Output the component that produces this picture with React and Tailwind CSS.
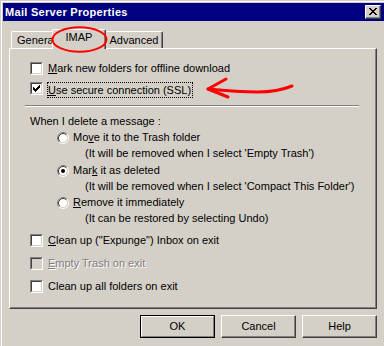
import React from "react";

function CheckMark() {
  const cols = [2, 3, 4, 3, 2, 1, 0];
  return (
    <svg width="7" height="7" viewBox="0 0 7 7" shapeRendering="crispEdges">
      {cols.map((y, x) => (
        <rect key={x} x={x} y={y} width="1" height="3" fill="#000" />
      ))}
    </svg>
  );
}

function CheckBox({ checked = false, disabled = false }) {
  return (
    <span className="block w-[13px] h-[13px] shrink-0 border border-t-[#808080] border-l-[#808080] border-b-white border-r-white">
      <span
        className={
          disabled
            ? "flex items-center justify-center w-full h-full border border-t-[#404040] border-l-[#404040] border-b-[#d4d0c8] border-r-[#d4d0c8] bg-[#d4d0c8]"
            : "flex items-center justify-center w-full h-full border border-t-[#404040] border-l-[#404040] border-b-[#d4d0c8] border-r-[#d4d0c8] bg-white"
        }
      >
        {checked && <CheckMark />}
      </span>
    </span>
  );
}

function Radio({ checked = false }) {
  return (
    <svg width="12" height="12" viewBox="0 0 12 12" className="shrink-0 block">
      <circle cx="6" cy="6" r="4.2" fill="#fff" />
      <path d="M2.11 9.89 A5.5 5.5 0 0 1 9.89 2.11" fill="none" stroke="#808080" strokeWidth="1" />
      <path d="M9.89 2.11 A5.5 5.5 0 0 1 2.11 9.89" fill="none" stroke="#ffffff" strokeWidth="1" />
      <path d="M2.82 9.18 A4.5 4.5 0 0 1 9.18 2.82" fill="none" stroke="#404040" strokeWidth="1" />
      <path d="M9.18 2.82 A4.5 4.5 0 0 1 2.82 9.18" fill="none" stroke="#d4d0c8" strokeWidth="1" />
      {checked && <circle cx="6" cy="6" r="2" fill="#000" />}
    </svg>
  );
}

function CloseGlyph() {
  const rows = [
    [[0, 2], [6, 2]],
    [[1, 2], [5, 2]],
    [[2, 4]],
    [[3, 2]],
    [[2, 4]],
    [[1, 2], [5, 2]],
    [[0, 2], [6, 2]],
  ];
  return (
    <svg width="8" height="7" viewBox="0 0 8 7" shapeRendering="crispEdges">
      {rows.map((segs, y) =>
        segs.map(([x, w], i) => <rect key={y + "-" + i} x={x} y={y} width={w} height="1" fill="#000" />)
      )}
    </svg>
  );
}

export default function App() {
  return (
    <div className="relative w-[384px] h-[346px] overflow-hidden bg-[#d4d0c8] pl-px pt-px font-['Liberation_Sans',Arial,sans-serif] text-[11px] leading-[13px] text-black">
      <div className="h-full border-l border-t border-white pl-px pt-px">
        {/* title bar */}
        <div className="h-[18px] bg-[#000080] flex items-center justify-between pl-[2px] pr-[3px]">
          <span className="text-white font-bold tracking-[0.3px] whitespace-nowrap">Mail Server Properties</span>
          <span className="block w-[16px] h-[14px] border border-t-white border-l-white border-r-[#404040] border-b-[#404040] bg-[#d4d0c8] shadow-[inset_-1px_-1px_0_#808080]">
            <span className="flex w-full h-full items-center justify-center pb-px pr-px">
              <CloseGlyph />
            </span>
          </span>
        </div>

        <div className="pl-[6px] pt-[8px]">
          {/* tabs */}
          <div className="flex h-[19px] items-start">
            <div className="ml-[2px] mt-[2px] h-[17px] w-[43px] bg-[#d4d0c8] border-l border-t border-r border-l-white border-t-white border-r-[#404040] shadow-[inset_-1px_0_0_#808080] rounded-t-[2px] flex items-center pl-[5px] whitespace-nowrap">
              General
            </div>
            <div className="relative z-10 -ml-[2px] h-[20px] w-[54px] bg-[#d4d0c8] border-l border-t border-r border-l-white border-t-white border-r-[#404040] shadow-[inset_-1px_0_0_#808080] rounded-t-[2px] flex justify-center pt-px whitespace-nowrap">
              IMAP
            </div>
            <div className="-ml-px mt-[2px] h-[17px] w-[58px] bg-[#d4d0c8] border-l border-t border-r border-l-white border-t-white border-r-[#404040] shadow-[inset_-1px_0_0_#808080] rounded-t-[2px] flex items-center justify-center whitespace-nowrap">
              Advanced
            </div>
          </div>

          {/* panel */}
          <div className="w-[368px] h-[261px] border border-t-white border-l-white border-r-[#404040] border-b-[#404040] shadow-[inset_-1px_-1px_0_#808080] flex flex-col items-start">
            <div className="mt-[13px] ml-[20px] h-[13px] flex items-center">
              <CheckBox />
              <span className="ml-[4px] border border-transparent whitespace-nowrap">
                <u>M</u>ark new folders for offline download
              </span>
            </div>
            <div className="mt-[7px] ml-[20px] flex items-start">
              <CheckBox checked />
              <span className="ml-[4px] h-[16px] flex items-center border border-dotted border-black pr-px whitespace-nowrap">
                <span>
                  <u>U</u>se secure connection (SSL)
                </span>
              </span>
            </div>
            <div className="mt-[7px] ml-[15px] w-[334px] h-[2px] border-t border-b border-t-[#808080] border-b-white" />

            <div className="mt-[8px] ml-[20px] h-[13px] whitespace-nowrap">When I delete a message :</div>

            <div className="mt-[3px] ml-[47px] h-[13px] flex items-center">
              <Radio />
              <span className="ml-[4px] whitespace-nowrap">
                Mo<u>v</u>e it to the Trash folder
              </span>
            </div>
            <div className="mt-[3px] ml-[75px] h-[13px] whitespace-nowrap">
              (It will be removed when I select 'Empty Trash')
            </div>

            <div className="mt-[4px] ml-[47px] h-[13px] flex items-center">
              <Radio checked />
              <span className="ml-[4px] whitespace-nowrap">
                Mar<u>k</u> it as deleted
              </span>
            </div>
            <div className="mt-[3px] ml-[75px] h-[13px] whitespace-nowrap">
              (It will be removed when I select 'Compact This Folder')
            </div>

            <div className="mt-[3px] ml-[47px] h-[13px] flex items-center">
              <Radio />
              <span className="ml-[4px] whitespace-nowrap">
                <u>R</u>emove it immediately
              </span>
            </div>
            <div className="mt-[3px] ml-[75px] h-[13px] whitespace-nowrap">
              (It can be restored by selecting Undo)
            </div>

            <div className="mt-[9px] ml-[20px] h-[13px] flex items-center">
              <CheckBox />
              <span className="ml-[4px] border border-transparent whitespace-nowrap">
                <u>C</u>lean up ("Expunge") Inbox on exit
              </span>
            </div>
            <div className="mt-[10px] ml-[20px] h-[13px] flex items-center">
              <CheckBox disabled />
              <span className="ml-[4px] border border-transparent whitespace-nowrap text-[#808080] [text-shadow:1px_1px_0_#ffffff]">
                <u>E</u>mpty Trash on exit
              </span>
            </div>
            <div className="mt-[10px] ml-[20px] h-[13px] flex items-center">
              <CheckBox />
              <span className="ml-[4px] border border-transparent whitespace-nowrap">
                Clean up all folders on exit
              </span>
            </div>
          </div>

          {/* buttons */}
          <div className="mt-[6px] w-[368px] flex justify-end gap-[6px]">
            <div className="w-[75px] h-[23px] border border-black">
              <div className="w-full h-full border border-t-white border-l-white border-r-[#808080] border-b-[#808080] flex items-center justify-center">
                OK
              </div>
            </div>
            <div className="w-[75px] h-[23px] border border-t-white border-l-white border-r-[#404040] border-b-[#404040] shadow-[inset_-1px_-1px_0_#808080] flex items-center justify-center">
              Cancel
            </div>
            <div className="w-[75px] h-[23px] border border-t-white border-l-white border-r-[#404040] border-b-[#404040] shadow-[inset_-1px_-1px_0_#808080] flex items-center justify-center">
              Help
            </div>
          </div>
        </div>
      </div>

      {/* red annotations */}
      <svg
        className="absolute left-0 top-0 pointer-events-none z-20"
        width="384"
        height="346"
        viewBox="0 0 384 346"
      >
        <ellipse cx="79.5" cy="39.5" rx="27" ry="12.3" fill="none" stroke="#ff0000" strokeWidth="2" />
        <path
          d="M292 86 C282 90 272 92 258 92 C244 92 228 91 208 89"
          fill="none"
          stroke="#ff0000"
          strokeWidth="3"
          strokeLinecap="round"
        />
        <path
          d="M226 79 L208 89 L228 97"
          fill="none"
          stroke="#ff0000"
          strokeWidth="3"
          strokeLinecap="round"
          strokeLinejoin="round"
        />
      </svg>
    </div>
  );
}
